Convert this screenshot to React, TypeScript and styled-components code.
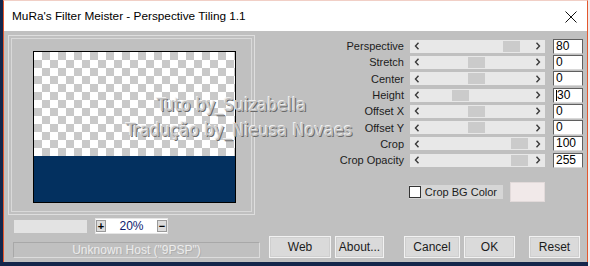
import styled, { createGlobalStyle } from "styled-components";

const GlobalStyle = createGlobalStyle`
  html, body {
    margin: 0;
    padding: 0;
  }
  body {
    width: 590px;
    height: 266px;
    overflow: hidden;
    background: linear-gradient(to right, #14264b 0, #14264b 588px, #f2ecec 588px);
    font-family: "Liberation Sans", Arial, sans-serif;
  }
`;

const Desktop = styled.div`
  display: flex;
  padding-left: 3px;
  height: 266px;
  box-sizing: border-box;
`;

const Window = styled.div`
  width: 585px;
  height: 262px;
  box-sizing: border-box;
  border: 1px solid #e4572e;
  border-top-color: #f1cfc6;
  display: flex;
  flex-direction: column;
`;

const TitleBar = styled.div`
  height: 30px;
  flex-shrink: 0;
  background: #fff;
  display: flex;
  align-items: center;
  justify-content: space-between;
  padding: 0 10px 0 8px;
`;

const TitleText = styled.span`
  font-family: "Liberation Sans", Arial, sans-serif;
  font-size: 11.8px;
  color: #000;
  padding-bottom: 1px;
`;

const CloseIcon = styled.svg`
  width: 12px;
  height: 12px;
  margin-top: 1px;
`;

const Client = styled.div`
  position: relative;
  flex: 1;
  background: #c0c0c0;
  display: flex;
  padding: 4px 4px 4px 4px;
  box-sizing: border-box;
`;

/* ---------- left pane ---------- */

const LeftPane = styled.div`
  width: 253px;
  display: flex;
  flex-direction: column;
`;

const PreviewFrame = styled.div`
  width: 247px;
  height: 180px;
  box-sizing: border-box;
  border: 1px solid #dedede;
  padding: 2px;
`;

const PreviewInner = styled.div`
  height: 100%;
  box-sizing: border-box;
  border: 1px solid #d9d9d9;
  padding: 12px 0 0 21px;
`;

const PreviewImage = styled.div`
  width: 203px;
  height: 152px;
  box-sizing: border-box;
  border: 1px solid #000;
  display: flex;
  flex-direction: column;
`;

const Checker = styled.div`
  flex: 1;
  background-color: #fff;
  background-image: repeating-conic-gradient(#c9c9c9 0 25%, #ffffff 0 50%);
  background-size: 16px 16px;
  background-position: 0 0;
`;

const TileBand = styled.div`
  height: 46px;
  background: #03305f;
`;

const ZoomRow = styled.div`
  display: flex;
  align-items: center;
  gap: 8px;
  margin-top: 4px;
  padding-left: 6px;
  height: 14px;
`;

const ProgressTrack = styled.div`
  width: 73px;
  height: 13px;
  background: #e3e3e3;
`;

const ZoomBox = styled.div`
  display: flex;
  align-items: center;
  height: 14px;
  background: #fff;
  border: 1px solid #e6e6e6;
`;

const SpinButton = styled.div`
  width: 10px;
  height: 12px;
  box-sizing: border-box;
  background: #dcdcdc;
  border: 1px solid #9a9a9a;
  display: flex;
  align-items: center;
  justify-content: center;
  font-size: 11px;
  font-weight: bold;
  line-height: 1;
  color: #000;
`;

const ZoomValue = styled.span`
  width: 51px;
  text-align: center;
  font-size: 12px;
  color: #0c1a6e;
`;

const StatusBar = styled.div`
  margin-top: 9px;
  margin-left: 5px;
  width: 247px;
  height: 16px;
  box-sizing: border-box;
  border: 1px solid #dcdcdc;
  border-left-color: #a8a8a8;
  border-top-color: #a8a8a8;
  display: flex;
  align-items: center;
  justify-content: center;
  font-size: 12px;
  color: #ececec;
  text-shadow: 1px 1px 0 #b0b0b0;
`;

/* ---------- right pane ---------- */

const RightPane = styled.div`
  flex: 1;
  display: flex;
  flex-direction: column;
`;

const SliderList = styled.div`
  margin-top: 3px;
  display: flex;
  flex-direction: column;
`;

const SliderRow = styled.div`
  height: 16.3px;
  display: flex;
  align-items: center;
  justify-content: flex-end;
`;

const SliderLabel = styled.span`
  font-size: 11px;
  color: #1c1c1c;
  margin-right: 6px;
  white-space: nowrap;
`;

const SliderTrack = styled.div`
  position: relative;
  width: 135px;
  height: 13px;
  background: #e8e8e8;
  margin-right: 8px;
  display: flex;
  align-items: center;
  justify-content: space-between;
  padding: 0 4px;
  box-sizing: border-box;
`;

const SliderThumb = styled.div`
  position: absolute;
  top: 1px;
  width: 17px;
  height: 11px;
  background: #cbcbcb;
`;

const Arrow = styled.svg`
  width: 6px;
  height: 8px;
  position: relative;
  z-index: 1;
`;

const ValueBox = styled.div`
  width: 30px;
  height: 15px;
  box-sizing: border-box;
  background: #fff;
  border: 1px solid #5f5f5f;
  border-bottom-color: #d8d8d8;
  font-size: 12px;
  line-height: 13px;
  padding-left: 2px;
  color: #000;
  display: flex;
  align-items: center;
`;

const Caret = styled.span`
  width: 1px;
  height: 11px;
  background: #000;
`;

const OptionRow = styled.div`
  margin-top: 14px;
  display: flex;
  align-items: center;
  justify-content: flex-end;
  padding-right: 38px;
  height: 20px;
`;

const CheckLabel = styled.label`
  display: flex;
  align-items: center;
  gap: 4px;
  background: #d6d6d6;
  height: 14px;
  padding-right: 6px;
  font-size: 11px;
  color: #1c1c1c;
  margin-right: 7px;
`;

const CheckBox = styled.span`
  width: 12px;
  height: 12px;
  box-sizing: border-box;
  background: #fff;
  border: 1px solid #333;
`;

const Swatch = styled.div`
  width: 35px;
  height: 20px;
  box-sizing: border-box;
  background: #f1e9e9;
  border: 1px solid #e2dada;
`;

const ButtonRow = styled.div`
  margin-top: auto;
  display: flex;
  align-items: center;
  padding-left: 8px;
  padding-right: 3px;
  gap: 4px;
`;

const Button = styled.div<{ $w: number; $gapBefore?: number }>`
  width: ${(p) => p.$w}px;
  height: 22px;
  box-sizing: border-box;
  margin-left: ${(p) => p.$gapBefore ?? 0}px;
  background: #dadada;
  border: 1px solid #f2f2f2;
  box-shadow: inset 0 0 0 1px #cfcfcf;
  display: flex;
  align-items: center;
  justify-content: center;
  font-size: 12px;
  color: #1c1c1c;
`;

const Spacer = styled.div`
  flex: 1;
`;

const Watermark = styled.div`
  position: absolute;
  left: 122px;
  top: 63px;
  display: flex;
  flex-direction: column;
  gap: 3px;
  pointer-events: none;
`;

const WatermarkLine = styled.span<{ $indent: number }>`
  margin-left: ${(p) => p.$indent}px;
  font-family: "DejaVu Sans Condensed", "DejaVu Sans", sans-serif;
  font-size: 18px;
  line-height: 22px;
  color: #c2c2c2;
  text-shadow: -1px -1px 0 #f0f0f0, 1px 1px 0 #6a6a6a;
  white-space: nowrap;
`;

type Slider = { label: string; value: string; pos: number; caret?: boolean };

const sliders: Slider[] = [
  { label: "Perspective", value: "80", pos: 0.886 },
  { label: "Stretch", value: "0", pos: 0.49 },
  { label: "Center", value: "0", pos: 0.49 },
  { label: "Height", value: "30", pos: 0.307, caret: true },
  { label: "Offset X", value: "0", pos: 0.49 },
  { label: "Offset Y", value: "0", pos: 0.49 },
  { label: "Crop", value: "100", pos: 0.977 },
  { label: "Crop Opacity", value: "255", pos: 0.977 },
];

const LeftArrow = () => (
  <Arrow viewBox="0 0 6 8">
    <path d="M4.5 0.8 L1.5 4 L4.5 7.2" fill="none" stroke="#3a3a3a" strokeWidth="1.4" />
  </Arrow>
);

const RightArrow = () => (
  <Arrow viewBox="0 0 6 8">
    <path d="M1.5 0.8 L4.5 4 L1.5 7.2" fill="none" stroke="#3a3a3a" strokeWidth="1.4" />
  </Arrow>
);

const App = () => {
  return (
    <>
      <GlobalStyle />
      <Desktop>
        <Window>
          <TitleBar>
            <TitleText>MuRa's Filter Meister - Perspective Tiling 1.1</TitleText>
            <CloseIcon viewBox="0 0 12 12">
              <path d="M0.5 0.5 L11.5 11.5 M11.5 0.5 L0.5 11.5" stroke="#111" strokeWidth="1" />
            </CloseIcon>
          </TitleBar>
          <Client>
            <LeftPane>
              <PreviewFrame>
                <PreviewInner>
                  <PreviewImage>
                    <Checker />
                    <TileBand />
                  </PreviewImage>
                </PreviewInner>
              </PreviewFrame>
              <ZoomRow>
                <ProgressTrack />
                <ZoomBox>
                  <SpinButton>+</SpinButton>
                  <ZoomValue>20%</ZoomValue>
                  <SpinButton>−</SpinButton>
                </ZoomBox>
              </ZoomRow>
              <StatusBar>Unknown Host ("9PSP")</StatusBar>
            </LeftPane>

            <RightPane>
              <SliderList>
                {sliders.map((s) => (
                  <SliderRow key={s.label}>
                    <SliderLabel>{s.label}</SliderLabel>
                    <SliderTrack>
                      <SliderThumb style={{ left: 15 + s.pos * 88 }} />
                      <LeftArrow />
                      <RightArrow />
                    </SliderTrack>
                    <ValueBox>
                      {s.caret && <Caret />}
                      {s.value}
                    </ValueBox>
                  </SliderRow>
                ))}
              </SliderList>

              <OptionRow>
                <CheckLabel>
                  <CheckBox />
                  Crop BG Color
                </CheckLabel>
                <Swatch />
              </OptionRow>

              <ButtonRow>
                <Button $w={62}>Web</Button>
                <Button $w={49}>About...</Button>
                <Spacer />
                <Button $w={56}>Cancel</Button>
                <Button $w={51}>OK</Button>
                <Button $w={51} $gapBefore={10}>Reset</Button>
              </ButtonRow>
            </RightPane>

            <Watermark>
              <WatermarkLine $indent={31}>Tuto by_Suizabella</WatermarkLine>
              <WatermarkLine $indent={0}>Tradução by_Nieusa Novaes</WatermarkLine>
            </Watermark>
          </Client>
        </Window>
      </Desktop>
    </>
  );
};

export default App;
